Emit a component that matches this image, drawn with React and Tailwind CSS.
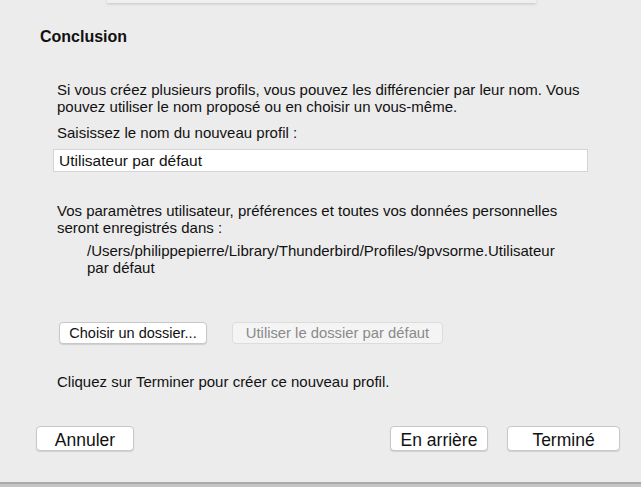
export default function App() {
  const font = { fontFamily: '"Liberation Sans", Arial, sans-serif' };
  return (
    <div className="relative h-[487px] w-[641px] overflow-hidden bg-[#ececec] text-[#111]" style={font}>
      {/* parent sheet edge peeking in at the top */}
      <div className="absolute left-[107px] top-0 h-[3px] w-[429px] bg-[#efefef] shadow-[0_1px_3px_rgba(0,0,0,0.18)]" />

      <div className="flex h-[482px] flex-col">
        <h1 className="pl-[40px] pt-[28px] text-[16px] font-bold leading-[18px]">Conclusion</h1>

        <div className="flex flex-col pl-[57px] pr-[40px] pt-[35px] text-[15px] leading-[17px]">
          <p className="whitespace-nowrap">
            Si vous créez plusieurs profils, vous pouvez les différencier par leur nom. Vous
            <br />
            pouvez utiliser le nom proposé ou en choisir un vous-même.
          </p>
          <p className="mt-[9px]">Saisissez le nom du nouveau profil :</p>
          <div className="-ml-[4px] mt-[8px] flex h-[23px] w-[535px] items-center border border-[#d4d4d4] bg-white pl-[5px] text-[15.5px]">
            Utilisateur par défaut
          </div>

          <p className="mt-[30px] whitespace-nowrap">
            Vos paramètres utilisateur, préférences et toutes vos données personnelles
            <br />
            seront enregistrés dans :
          </p>
          <p className="mt-[6px] whitespace-nowrap pl-[30px]">
            /Users/philippepierre/Library/Thunderbird/Profiles/9pvsorme.Utilisateur
            <br />
            par défaut
          </p>

          <div className="mt-[46px] flex gap-[25px] pl-[2px]">
            <button className="h-[22px] w-[148px] rounded-[4px] border border-[#c8c8c8] bg-white text-[14.5px] shadow-[0_1px_1px_rgba(0,0,0,0.12)]">
              Choisir un dossier...
            </button>
            <button disabled className="h-[22px] w-[211px] rounded-[4px] border border-[#dcdcdc] bg-[#f4f4f4] text-[14.8px] text-[#8a8a8a]">
              Utiliser le dossier par défaut
            </button>
          </div>

          <p className="mt-[29px]">Cliquez sur Terminer pour créer ce nouveau profil.</p>
        </div>

        <div className="mt-auto flex items-center pb-[31px] pl-[36px] pr-[21px] text-[17.5px]">
          <button className="h-[25px] w-[98px] rounded-[4px] border border-[#c8c8c8] bg-white shadow-[0_1px_1px_rgba(0,0,0,0.12)]">
            Annuler
          </button>
          <div className="flex-1" />
          <button className="h-[25px] w-[98px] rounded-[4px] border border-[#c8c8c8] bg-white shadow-[0_1px_1px_rgba(0,0,0,0.12)]">
            En arrière
          </button>
          <button className="ml-[19px] h-[25px] w-[113px] rounded-[4px] border border-[#c8c8c8] bg-white shadow-[0_1px_1px_rgba(0,0,0,0.12)]">
            Terminé
          </button>
        </div>
      </div>

      <div className="h-[2px] bg-[#a9a9a9]" />
      <div className="h-[3px] bg-[#c4c4c4]" />
    </div>
  );
}
